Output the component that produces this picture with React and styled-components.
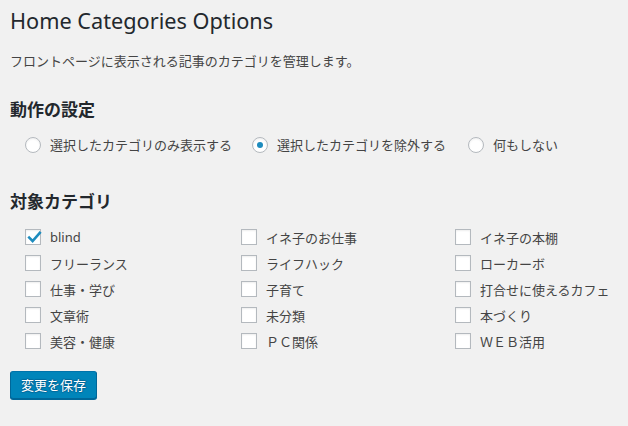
import React from "react";
import styled, { createGlobalStyle } from "styled-components";

const Global = createGlobalStyle`
  html, body { margin: 0; padding: 0; background: #f1f1f1; }
  body {
    font-family: "Noto Sans", "Noto Sans CJK JP", sans-serif;
    font-size: 13px;
    color: #444;
  }
`;

const Wrap = styled.div`
  padding: 6px 10px 20px 10px;
`;

const Title = styled.h1`
  margin: 0;
  font-size: 21.7px;
  line-height: 30px;
  font-weight: 400;
  color: #23282d;
`;

const Desc = styled.p`
  margin: 15px 0 0 0;
  line-height: 20px;
  font-size: 13px;
`;

const SectionTitle = styled.h2`
  margin: ${(p) => p.$top}px 0 0 0;
  font-size: 17px;
  line-height: 24px;
  font-weight: 700;
  color: #23282d;
  font-family: "Noto Sans CJK JP", sans-serif;
`;

const RadioRow = styled.div`
  display: flex;
  align-items: center;
  margin: 12px 0 0 15px;
  height: 24px;
`;

const Option = styled.label`
  display: flex;
  align-items: center;
  margin-right: ${(p) => p.$gap || 0}px;
  line-height: 20px;
  white-space: nowrap;
`;

const Box = styled.span`
  box-sizing: border-box;
  width: 16px;
  height: 16px;
  flex: none;
  border: 1px solid #b4b9be;
  background: #fff;
  box-shadow: inset 0 1px 2px rgba(0, 0, 0, 0.07);
  border-radius: ${(p) => (p.$round ? "50%" : "0")};
  margin-right: 9px;
  display: flex;
  align-items: center;
  justify-content: center;
  position: relative;
`;

const Dot = styled.span`
  width: 6px;
  height: 6px;
  border-radius: 50%;
  background: #1e8cbe;
`;

const Check = styled.svg`
  position: absolute;
  left: 0px;
  top: -1px;
  width: 17px;
  height: 17px;
`;

const Grid = styled.div`
  display: grid;
  grid-template-columns: 216px 214px 1fr;
  grid-auto-rows: 26px;
  margin: 11px 0 0 15px;
`;

const Cell = styled.label`
  display: flex;
  align-items: center;
  white-space: nowrap;
`;

const Button = styled.button`
  margin-top: 17px;
  box-sizing: border-box;
  height: 28px;
  padding: 0 10px;
  font-family: "Noto Sans CJK JP", sans-serif;
  font-size: 13px;
  line-height: 26px;
  color: #fff;
  background: #0085ba;
  border: 1px solid;
  border-color: #0073aa #006799 #006799;
  border-radius: 3px;
  box-shadow: 0 1px 0 #006799;
  text-shadow: 0 -1px 1px #006799, 1px 0 1px #006799, 0 1px 1px #006799, -1px 0 1px #006799;
  cursor: pointer;
`;

const radios = [
  { label: "選択したカテゴリのみ表示する", gap: 20 },
  { label: "選択したカテゴリを除外する", checked: true, gap: 22 },
  { label: "何もしない" },
];

const cats = [
  ["blind", true],
  ["イネ子のお仕事"],
  ["イネ子の本棚"],
  ["フリーランス"],
  ["ライフハック"],
  ["ローカーボ"],
  ["仕事・学び"],
  ["子育て"],
  ["打合せに使えるカフェ"],
  ["文章術"],
  ["未分類"],
  ["本づくり"],
  ["美容・健康"],
  ["ＰＣ関係"],
  ["ＷＥＢ活用"],
];

export default function App() {
  return (
    <>
      <Global />
      <Wrap>
        <Title>Home Categories Options</Title>
        <Desc>フロントページに表示される記事のカテゴリを管理します。</Desc>
        <SectionTitle $top={26}>動作の設定</SectionTitle>
        <RadioRow>
          {radios.map((r) => (
            <Option key={r.label} $gap={r.gap}>
              <Box $round>{r.checked && <Dot />}</Box>
              {r.label}
            </Option>
          ))}
        </RadioRow>
        <SectionTitle $top={32}>対象カテゴリ</SectionTitle>
        <Grid>
          {cats.map(([name, checked]) => (
            <Cell key={name}>
              <Box>
                {checked && (
                  <Check viewBox="0 0 17 17">
                    <path
                      d="M3.2 8.6 L6.6 12 L13.8 3.8"
                      fill="none"
                      stroke="#1e8cbe"
                      strokeWidth="2.6"
                      strokeLinecap="square"
                    />
                  </Check>
                )}
              </Box>
              {name}
            </Cell>
          ))}
        </Grid>
        <Button>変更を保存</Button>
      </Wrap>
    </>
  );
}
